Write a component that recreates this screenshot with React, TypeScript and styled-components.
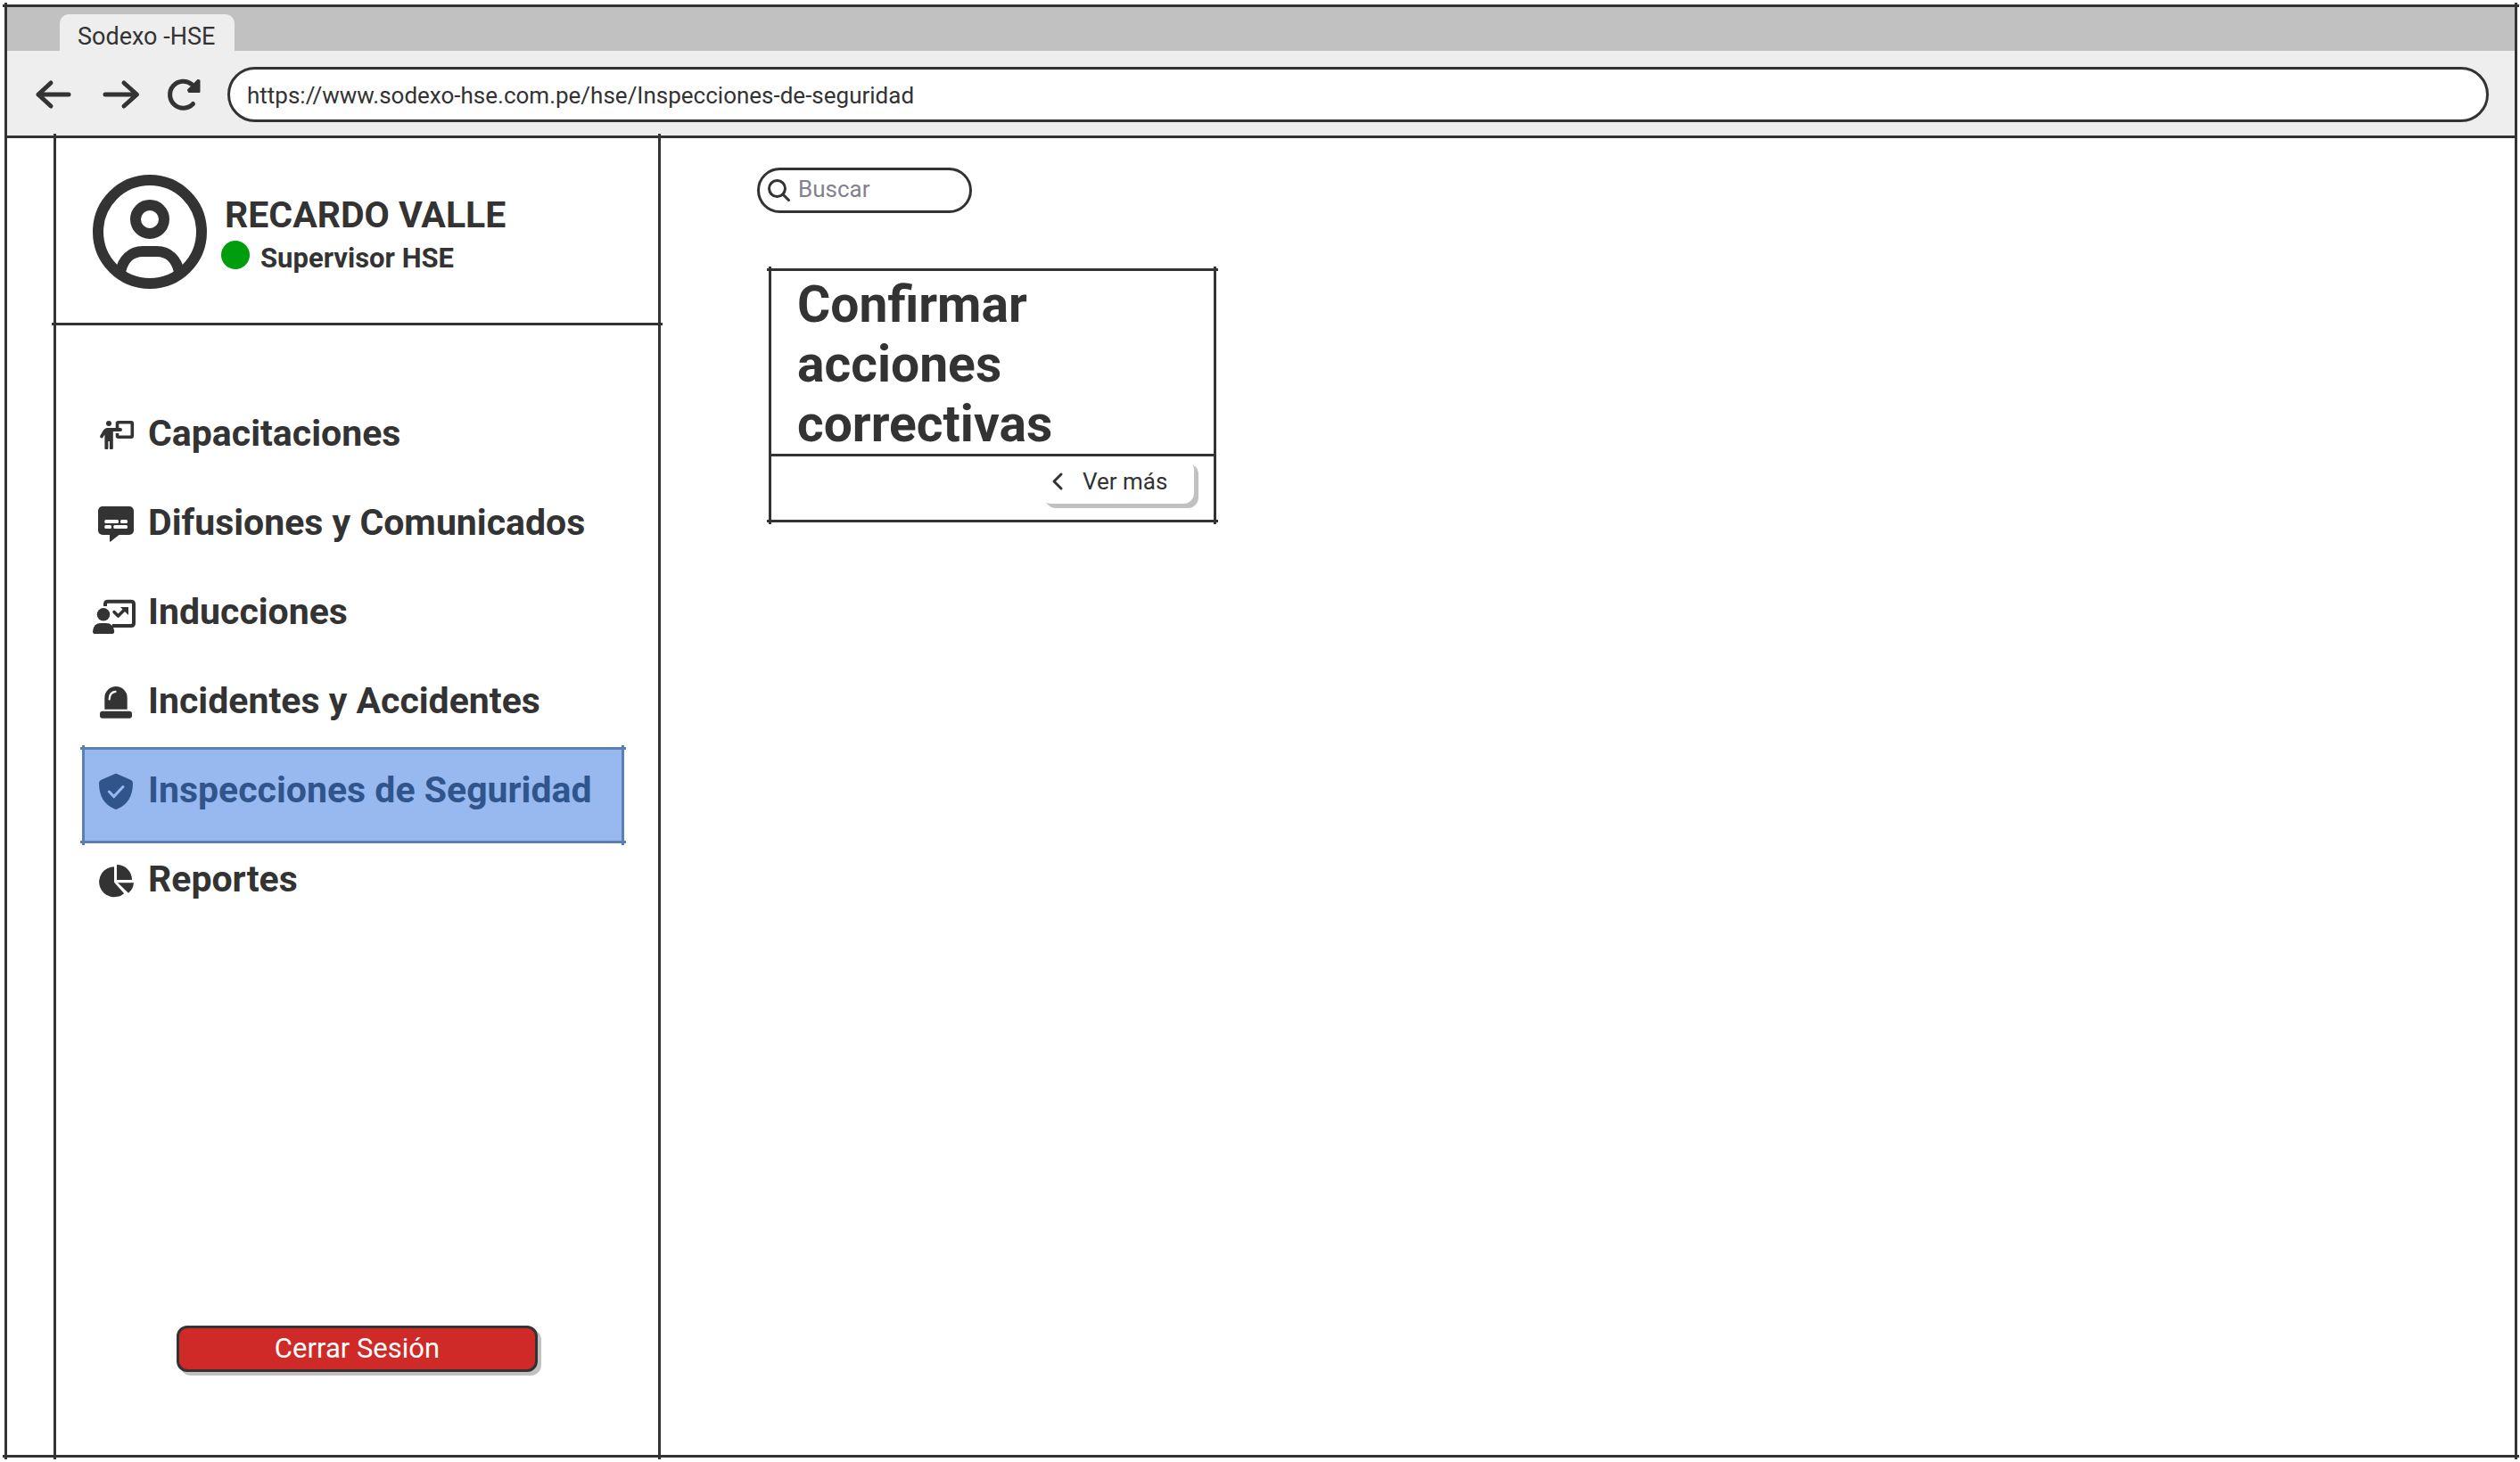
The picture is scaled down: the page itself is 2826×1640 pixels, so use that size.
import React from 'react';
import styled, { createGlobalStyle, css } from 'styled-components';

const ink = '#333333';
const shade = '#c1c1c1';
const chrome = '#eeeeee';

const GlobalStyle = createGlobalStyle`
  *, *::before, *::after { box-sizing: border-box; }
  body {
    margin: 0;
    background: #ffffff;
    color: ${ink};
    font-family: Roboto, "Open Sans", sans-serif;
    font-size: 26px;
    line-height: 36px;
  }
  button, input { font: inherit; color: inherit; }
  svg { display: block; flex: none; overflow: visible; }
`;

/* Pencil-style outline: every side runs a little past its corners. */
const sketched = css`
  position: relative;
  border: 3px solid ${ink};
  &::before, &::after {
    content: '';
    position: absolute;
    pointer-events: none;
    border: 0 solid ${ink};
  }
  &::before { inset: -3px -5px; border-width: 3px 0; }
  &::after { inset: -5px -3px; border-width: 0 3px; }
`;

const Screen = styled.div`
  min-height: 100vh;
  display: flex;
  padding: 5px 3px 5px 5px;
`;

const BrowserWindow = styled.div`
  ${sketched}
  flex: 1;
  min-width: 0;
  display: flex;
  flex-direction: column;
`;

const TabStrip = styled.div`
  display: flex;
  align-items: flex-end;
  height: 49px;
  padding-left: 59px;
  background: ${shade};
`;

const Tab = styled.div`
  min-width: 196px;
  height: 41px;
  padding: 7px 20px 0;
  line-height: 36px;
  border-radius: 10px 10px 0 0;
  background: ${chrome};
  font-size: 27px;
`;

const Toolbar = styled.div`
  display: flex;
  align-items: center;
  gap: 27px;
  padding: 18px 29px 15px 32px;
  background: ${chrome};
  border-bottom: 3px solid ${ink};
`;

const ToolbarButtons = styled.div`
  display: flex;
  gap: 34px;
`;

const IconButton = styled.button`
  padding: 0;
  border: 0;
  background: none;
`;

const AddressField = styled.input`
  flex: 1;
  min-width: 0;
  height: 62px;
  padding: 2px 19px 0;
  border: 3px solid ${ink};
  border-radius: 31px;
  background: #ffffff;
  outline: none;
`;

const Page = styled.div`
  flex: 1;
  display: flex;
  padding-left: 52px;
`;

const Sidebar = styled.aside`
  position: relative;
  flex: none;
  display: flex;
  flex-direction: column;
  width: 681px;
  border: solid ${ink};
  border-width: 0 3px;
  &::after {
    content: '';
    position: absolute;
    inset: -5px -3px;
    border: solid ${ink};
    border-width: 0 3px;
    pointer-events: none;
  }
`;

const Profile = styled.header`
  position: relative;
  display: flex;
  gap: 16px;
  height: 210px;
  padding: 41px 0 0 41px;
  &::after {
    content: '';
    position: absolute;
    inset: auto -5px 0;
    border-bottom: 3px solid ${ink};
  }
`;

const Identity = styled.div`
  display: flex;
  flex-direction: column;
  gap: 4px;
  padding-top: 20px;
`;

const UserName = styled.h1`
  margin: 0;
  padding-left: 4px;
  font-size: 41px;
  line-height: 50px;
  font-weight: 700;
`;

const Role = styled.p`
  display: flex;
  align-items: flex-start;
  gap: 12px;
  margin: 0;
  font-size: 31px;
  line-height: 40px;
  font-weight: 700;
`;

const StatusDot = styled.span`
  width: 32px;
  height: 32px;
  border-radius: 50%;
  background: #009e0f;
`;

const Menu = styled.nav`
  display: flex;
  flex-direction: column;
  padding: 73px 38px 0 29px;
`;

const MenuLink = styled.a<{ $active?: boolean }>`
  position: relative;
  display: flex;
  align-items: center;
  gap: 14px;
  height: 100px;
  padding-left: 12px;
  font-size: 41px;
  font-weight: 700;
  white-space: nowrap;
  text-decoration: none;
  color: ${p => (p.$active ? '#30558c' : ink)};
`;

const MenuLabel = styled.span`
  padding-bottom: 4px;
  z-index: 1;
`;

const MenuIcon = styled.span`
  z-index: 1;
`;

const Highlight = styled.span`
  ${sketched}
  position: absolute;
  inset: 0 0 -8px;
  background: #97b9f0;
  border-color: #5a80b0;
  &::before, &::after { border-color: #5a80b0; }
`;

const LogoutButton = styled.button`
  align-self: center;
  width: 405px;
  height: 52px;
  margin: auto 0 93px;
  padding: 0;
  border: 3px solid ${ink};
  border-radius: 12px;
  background: #cf2a27;
  box-shadow: 4px 4px 0 ${shade};
  color: #ffffff;
  font-size: 31px;
`;

const Content = styled.main`
  flex: 1;
  display: flex;
  flex-direction: column;
  align-items: flex-start;
  gap: 62px;
  padding: 33px 108px;
`;

const SearchBox = styled.label`
  display: flex;
  align-items: center;
  gap: 9px;
  width: 241px;
  height: 51px;
  padding: 0 20px 0 9px;
  border: 3px solid ${ink};
  border-radius: 26px;
`;

const SearchInput = styled.input`
  flex: 1;
  min-width: 0;
  padding: 0 0 4px;
  border: 0;
  outline: none;
  background: none;
  &::placeholder { color: #84818f; opacity: 1; }
`;

const Card = styled.section`
  ${sketched}
  width: 502px;
  margin-left: 13px;
`;

const CardTitle = styled.h2`
  margin: 0;
  padding: 4px 29px 0;
  font-size: 57px;
  line-height: 67px;
  font-weight: 700;
`;

const CardFooter = styled.div`
  display: flex;
  justify-content: flex-end;
  height: 74px;
  padding: 3px 22px 0 0;
  border-top: 3px solid ${ink};
`;

const MoreButton = styled.button`
  display: flex;
  align-items: center;
  gap: 22px;
  width: 172px;
  height: 50px;
  padding: 0 0 0 13px;
  border: 0;
  border-radius: 12px;
  background: #ffffff;
  box-shadow: 5px 5px 0 ${shade};
`;

const ArrowIcon = ({ forward }: { forward?: boolean }) => (
  <svg width="40" height="34" viewBox="0 0 40 34" fill="none" stroke={ink} strokeWidth="5" strokeLinecap="round" strokeLinejoin="round" aria-hidden="true">
    {forward ? <path d="M4 17H39M25 4L39.500 17L25 30" /> : <path d="M37 17H3M17 4L3 17L17 30" />}
  </svg>
);

const ReloadIcon = () => (
  <svg width="40" height="34" viewBox="0 0 40 34" aria-hidden="true">
    <path d="M28.500 27.500A15 15 0 1 1 27 5.500" fill="none" stroke={ink} strokeWidth="5" strokeLinecap="round" />
    <path d="M35.500 1.500V14H24L23 12L34 1Z" fill={ink} stroke={ink} strokeWidth="2" strokeLinejoin="round" />
  </svg>
);

const AvatarIcon = () => (
  <svg width="128" height="128" viewBox="0 0 128 128" fill="none" stroke={ink} strokeWidth="12" aria-hidden="true">
    <circle cx="64" cy="64" r="58" />
    <circle cx="64" cy="50" r="16" />
    <path d="M31 109C34 95 43 86 56 86H72C85 86 94 95 97 109" />
  </svg>
);

const Glyph = ({ children }: { children: React.ReactNode }) => (
  <svg width="48" height="48" viewBox="0 0 48 48" fill="currentColor" aria-hidden="true">{children}</svg>
);

const TrainingIcon = () => (
  <Glyph>
    <circle cx="18" cy="11" r="3" />
    <path d="M27.500 17V11Q27.500 9.700 29 9.700H43Q44.300 9.700 44.300 11V25Q44.300 26.200 43 26.200H29Q27.500 26.200 27.500 25V22" fill="none" stroke="currentColor" strokeWidth="3.600" />
    <path d="M18 16H31A2 2 0 0 1 31 20H22.800V39Q22.800 40 21.800 40H19.800Q18.900 40 18.900 39V31H17.400V39Q17.400 40 16.400 40H14.400Q13.400 40 13.400 39V23.500L11 27.200A1.900 1.900 0 0 1 8.200 25L12 18.500Q13.600 16 16 16Z" />
  </Glyph>
);

const NoticeIcon = () => (
  <Glyph>
    <path d="M11 4H41A5 5 0 0 1 46 9V31A5 5 0 0 1 41 36H29.500L20 43.600Q19 44.200 19 43V36H11A5 5 0 0 1 6 31V9A5 5 0 0 1 11 4Z" />
    <g fill="#ffffff">
      <rect x="13.300" y="19" width="15.700" height="4" rx="1.500" />
      <rect x="31" y="19" width="8" height="4" rx="1.500" />
      <rect x="13.300" y="25" width="7.700" height="4" rx="1.500" />
      <rect x="23.300" y="25" width="15.700" height="4" rx="1.500" />
    </g>
  </Glyph>
);

const InductionIcon = () => (
  <Glyph>
    <path d="M14 16V13.500Q14 10.700 17 10.700H43Q46 10.700 46 13.500V35Q46 38 43 38H22" fill="none" stroke="currentColor" strokeWidth="4" />
    <circle cx="12" cy="25.300" r="7.200" />
    <path d="M0 44Q1 35 9 35H15Q23 35 24.200 44Q24.200 47 22 47H2Q0 47 0 44Z" />
    <path d="M24 22.500L28.500 27L36 19.500" fill="none" stroke="currentColor" strokeWidth="3.600" strokeLinecap="round" strokeLinejoin="round" />
    <path d="M31 17H40V26Z" />
  </Glyph>
);

const SirenIcon = () => (
  <Glyph>
    <path d="M13.300 31.700V18.500A12.700 12.500 0 0 1 38.700 18.500V31.700Z" />
    <rect x="8" y="33.700" width="36" height="8" rx="3" />
    <path d="M18.600 20.500Q18.800 12.500 25.500 11.900" fill="none" stroke="#ffffff" strokeWidth="2.200" strokeLinecap="round" />
  </Glyph>
);

const ShieldIcon = () => (
  <Glyph>
    <path d="M24.500 4.200Q26 3.400 27.500 4.200L43 11Q45 12 45 14.500Q45 36 27.500 43.600Q26 44.300 24.500 43.600Q7 36 7 14.500Q7 12 9 11Z" />
    <path d="M18.300 24L23.700 29.500L34 18.500" fill="none" stroke="#97b9f0" strokeWidth="3" strokeLinecap="round" />
  </Glyph>
);

const PieIcon = () => (
  <Glyph>
    <path d="M24 8.300V25.800L35.200 38.200A17 17 0 1 1 24 8.300Z" />
    <path d="M27 6A17 17 0 0 1 44 23H27Z" />
    <path d="M28 26.200H46A17 17 0 0 1 40 37.800Z" />
  </Glyph>
);

const menu = [
  { label: 'Capacitaciones', Icon: TrainingIcon },
  { label: 'Difusiones y Comunicados', Icon: NoticeIcon },
  { label: 'Inducciones', Icon: InductionIcon },
  { label: 'Incidentes y Accidentes', Icon: SirenIcon },
  { label: 'Inspecciones de Seguridad', Icon: ShieldIcon, active: true },
  { label: 'Reportes', Icon: PieIcon },
];

export default function App() {
  return (
    <Screen>
      <GlobalStyle />
      <BrowserWindow>
        <TabStrip>
          <Tab>Sodexo -HSE</Tab>
        </TabStrip>
        <Toolbar>
          <ToolbarButtons>
            <IconButton type="button" aria-label="Atrás"><ArrowIcon /></IconButton>
            <IconButton type="button" aria-label="Adelante"><ArrowIcon forward /></IconButton>
            <IconButton type="button" aria-label="Recargar"><ReloadIcon /></IconButton>
          </ToolbarButtons>
          <AddressField aria-label="Dirección" defaultValue="https://www.sodexo-hse.com.pe/hse/Inspecciones-de-seguridad" />
        </Toolbar>
        <Page>
          <Sidebar>
            <Profile>
              <AvatarIcon />
              <Identity>
                <UserName>RECARDO VALLE</UserName>
                <Role><StatusDot />Supervisor HSE</Role>
              </Identity>
            </Profile>
            <Menu>
              {menu.map(({ label, Icon, active }) => (
                <MenuLink key={label} href="#" $active={active} aria-current={active ? 'page' : undefined}>
                  {active && <Highlight />}
                  <MenuIcon><Icon /></MenuIcon>
                  <MenuLabel>{label}</MenuLabel>
                </MenuLink>
              ))}
            </Menu>
            <LogoutButton type="button">Cerrar Sesión</LogoutButton>
          </Sidebar>
          <Content>
            <SearchBox>
              <svg width="25" height="25" viewBox="0 0 25 25" fill="none" stroke={ink} strokeWidth="3" strokeLinecap="round" aria-hidden="true">
                <circle cx="10.500" cy="10.500" r="9" />
                <path d="M17 17L23.500 23.500" />
              </svg>
              <SearchInput type="text" placeholder="Buscar" aria-label="Buscar" />
            </SearchBox>
            <Card>
              <CardTitle>Confirmar acciones correctivas</CardTitle>
              <CardFooter>
                <MoreButton type="button">
                  <svg width="12" height="18" viewBox="0 0 12 18" fill="none" stroke={ink} strokeWidth="3" strokeLinecap="round" strokeLinejoin="round" aria-hidden="true">
                    <path d="M10 1L2 9L10 17" />
                  </svg>
                  Ver más
                </MoreButton>
              </CardFooter>
            </Card>
          </Content>
        </Page>
      </BrowserWindow>
    </Screen>
  );
}
